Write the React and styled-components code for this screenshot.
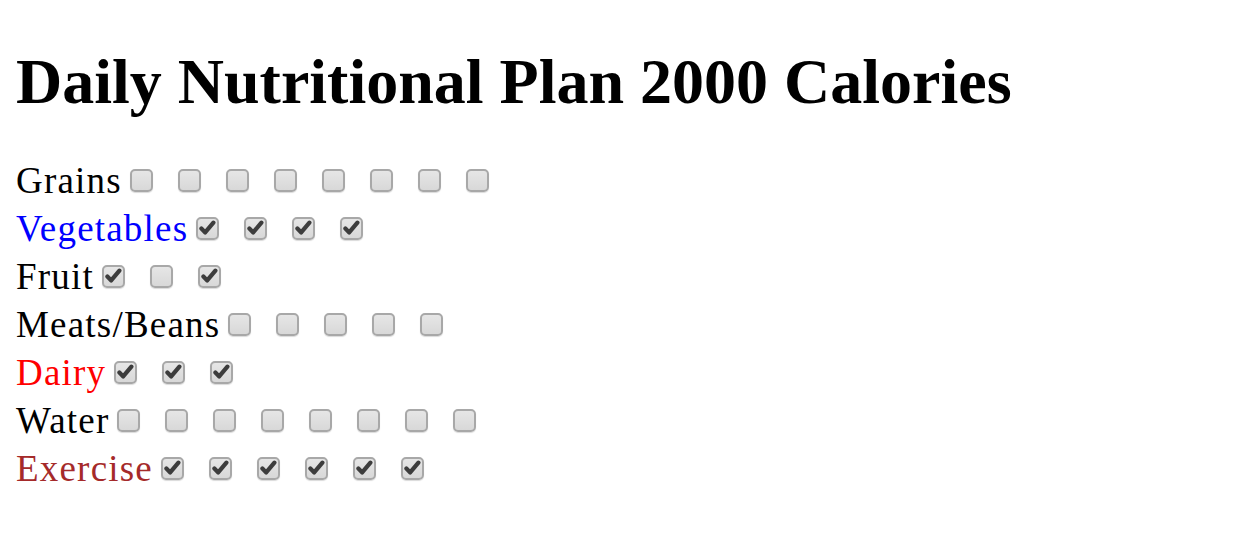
import React from "react";
import styled, { createGlobalStyle } from "styled-components";

const GlobalStyle = createGlobalStyle`
  html, body {
    margin: 0;
    padding: 0;
    background: #ffffff;
  }
  body {
    font-family: "Liberation Serif", "Times New Roman", serif;
  }
`;

const Page = styled.div`
  padding: 0 16px;
`;

const Title = styled.h1`
  margin: 0;
  padding-top: 42px;
  font-size: 64px;
  line-height: 80px;
  font-weight: bold;
  color: #000;
`;

const List = styled.div`
  margin-top: 34px;
  display: flex;
  flex-direction: column;
`;

const Row = styled.div`
  display: flex;
  align-items: center;
  height: 48px;
`;

const Label = styled.span`
  font-size: 37px;
  letter-spacing: 1.2px;
  color: ${(props) => props.color || "#000"};
  margin-right: 8px;
`;

const Box = styled.span`
  box-sizing: border-box;
  display: inline-flex;
  align-items: center;
  justify-content: center;
  width: 23px;
  height: 23px;
  margin-right: 25px;
  border: 2px solid #a8a8a8;
  border-radius: 5px;
  background: linear-gradient(#e6e6e6, #d8d8d8);
  box-shadow: 0 1px 1px rgba(0, 0, 0, 0.15);
`;

const Check = ({ checked }) => (
  <Box>
    {checked && (
      <svg width="17" height="16" viewBox="0 0 17 16">
        <path
          d="M2.4 8.6 L6.2 12.4 L14.4 2.6"
          fill="none"
          stroke="#3d3d3d"
          strokeWidth="4.2"
          strokeLinecap="round"
          strokeLinejoin="round"
        />
      </svg>
    )}
  </Box>
);

const groups = [
  { name: "Grains", count: 8, checked: false },
  { name: "Vegetables", count: 4, checked: true, color: "#0000ff" },
  { name: "Fruit", pattern: [true, false, true] },
  { name: "Meats/Beans", count: 5, checked: false },
  { name: "Dairy", count: 3, checked: true, color: "#ff0000" },
  { name: "Water", count: 8, checked: false },
  { name: "Exercise", count: 6, checked: true, color: "#a52a2a" },
];

export default function App() {
  return (
    <Page>
      <GlobalStyle />
      <Title>Daily Nutritional Plan 2000 Calories</Title>
      <List>
        {groups.map((g) => {
          const states = g.pattern || Array(g.count).fill(g.checked);
          return (
            <Row key={g.name}>
              <Label color={g.color}>{g.name}</Label>
              {states.map((c, i) => (
                <Check key={i} checked={c} />
              ))}
            </Row>
          );
        })}
      </List>
    </Page>
  );
}
